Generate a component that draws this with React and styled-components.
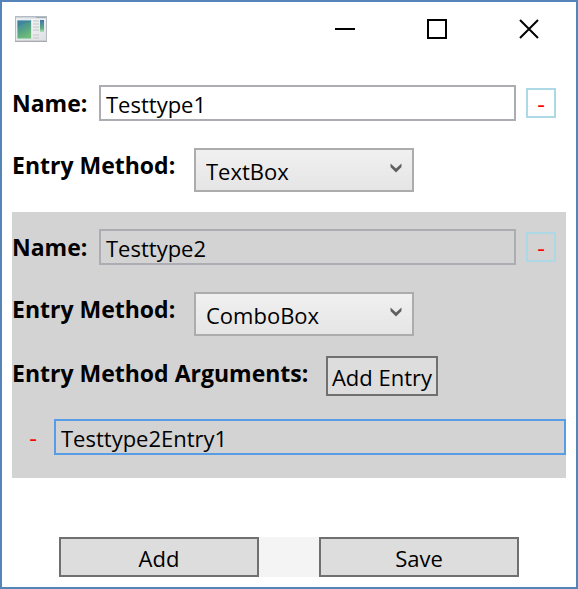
import React, { useState } from "react";
import styled, { createGlobalStyle } from "styled-components";

const GlobalStyle = createGlobalStyle`
  *, *::before, *::after { box-sizing: border-box; }
  body { margin: 0; background: #fff; }
  body, button, input, select {
    font-family: "Open Sans", "Noto Sans", sans-serif;
    font-size: 22px;
    line-height: 32px;
    color: #000;
  }
`;

const Window = styled.main`
  display: flex;
  flex-direction: column;
  min-height: 100vh;
  padding: 0 10px 10px;
  border: 2px solid #5585b8;
  background: #fff;
`;

const TitleBar = styled.header`
  display: flex;
  align-items: center;
  justify-content: space-between;
  height: 54px;
  margin-right: -10px;
  padding: 0 1px 0 3px;
`;

const WindowControls = styled.div`
  display: flex;
`;

const ControlButton = styled.button`
  display: grid;
  place-items: center;
  width: 92px;
  height: 54px;
  padding: 0;
  border: 0;
  background: none;
`;

const TypeList = styled.div`
  display: flex;
  flex-direction: column;
  margin-top: 12px;
`;

const TypeItem = styled.section`
  display: flex;
  flex-direction: column;
  gap: 20px;
  padding: 10px 0 20px;
  background: ${(p) => (p.$selected ? "#d3d3d3" : "transparent")};
`;

const Row = styled.div`
  display: flex;
  align-items: ${(p) => (p.$align ? p.$align : "flex-start")};
  min-height: ${(p) => p.$height}px;
`;

const Label = styled.label`
  flex: 0 0 ${(p) => p.$width}px;
  font-size: 23px;
  line-height: 34px;
  font-weight: 700;
  white-space: nowrap;
`;

const TextInput = styled.input`
  flex: 1;
  min-width: 0;
  height: 36px;
  padding: 2px 5px 0;
  border: 2px solid ${(p) => (p.$active ? "#569de5" : "#abadb3")};
  border-radius: 0;
  outline: 0;
  background: transparent;
`;

const RemoveButton = styled.button`
  flex: none;
  width: 30px;
  height: 30px;
  margin: 0 ${(p) => (p.$plain ? "6px" : "10px")};
  padding: 2px 0 0;
  border: 2px solid ${(p) => (p.$plain ? "transparent" : "#add8e6")};
  background: none;
  color: #f00;
  font-size: 24px;
  line-height: 24px;
`;

const SelectBox = styled.div`
  display: grid;
  width: 220px;
  height: 44px;
  border: 2px solid #acacac;
  background: linear-gradient(#f0f0f0, #e5e5e5);

  > * { grid-area: 1 / 1; }
  > svg { place-self: center end; margin: 0 10px 4px 0; pointer-events: none; }
`;

const Select = styled.select`
  width: 100%;
  height: 100%;
  padding: 2px 30px 0 10px;
  border: 0;
  border-radius: 0;
  outline: 0;
  appearance: none;
  background: transparent;
`;

const PushButton = styled.button`
  width: ${(p) => p.$width}px;
  height: 40px;
  padding: 2px 0 0;
  border: 2px solid #707070;
  background: #ddd;
  white-space: nowrap;
`;

const Footer = styled.footer`
  display: flex;
  justify-content: space-between;
  width: 460px;
  max-width: 100%;
  margin: auto auto 0;
  background: #f4f4f4;
`;

function AppIcon() {
  return (
    <svg width="32" height="26" viewBox="0 0 32 26" aria-hidden="true">
      <defs>
        <linearGradient id="pane" x1="0" y1="0" x2="0.4" y2="1">
          <stop offset="0" stopColor="#4682a8" />
          <stop offset="0.5" stopColor="#4f9c8a" />
          <stop offset="1" stopColor="#6fbd78" />
        </linearGradient>
        <linearGradient id="strip" x1="0" y1="0" x2="0" y2="1">
          <stop offset="0" stopColor="#3f75a8" />
          <stop offset="0.7" stopColor="#5fae80" />
          <stop offset="1" stopColor="#b9dfbd" />
        </linearGradient>
        <linearGradient id="frame" x1="0" y1="0" x2="1" y2="1">
          <stop offset="0" stopColor="#fff" />
          <stop offset="1" stopColor="#dcdfe2" />
        </linearGradient>
      </defs>
      <rect x="0.5" y="0.5" width="31" height="24.5" fill="url(#frame)" stroke="#b4bac0" />
      <path d="M1 1h30v1.5H1z" fill="#ccd6df" />
      <path d="M21 1h10v1H21z" fill="#9eabb8" />
      <rect x="2" y="4" width="14.5" height="19" fill="url(#pane)" stroke="#d9e6e6" />
      <path d="M2.500 12c4-4 9-6 13.500-6v-1.500H2.500z" fill="#3577a5" opacity="0.4" />
      <path d="M18 5h6M18 8h6M18 11h6M18 14h6M18 19h6M18 22h6" stroke="#cfd1d3" strokeWidth="1.500" />
      <rect x="25" y="4" width="4" height="12" fill="url(#strip)" />
      <path d="M0 25.500h32" stroke="#aaa" />
    </svg>
  );
}

function Chevron() {
  return (
    <svg width="12" height="10" viewBox="0 0 12 10" aria-hidden="true">
      <path d="M0.500 0.500L6 5.500l5.500-5v3.500L6 9.500 0.500 4z" fill="#606060" />
    </svg>
  );
}

function ControlIcon({ d }) {
  return (
    <svg width="22" height="22" viewBox="0 0 22 22" fill="none" stroke="#000" strokeWidth="2" aria-hidden="true">
      <path d={d} />
    </svg>
  );
}

const controls = [
  { name: "Minimize", d: "M1 11h20" },
  { name: "Maximize", d: "M2 2h18v18H2z" },
  { name: "Close", d: "M2 2l18 18M20 2L2 20" },
];

function EntryType({ id, initialName, initialMethod, initialEntries = [], selected }) {
  const [name, setName] = useState(initialName);
  const [method, setMethod] = useState(initialMethod);
  const [entries, setEntries] = useState(initialEntries);

  return (
    <TypeItem $selected={selected}>
      <Row $height={50} $align="center">
        <Label $width={87} htmlFor={`${id}-name`}>Name:</Label>
        <TextInput id={`${id}-name`} value={name} onChange={(e) => setName(e.target.value)} />
        <RemoveButton type="button" aria-label={`Remove ${name}`}>-</RemoveButton>
      </Row>
      <Row $height={44}>
        <Label $width={182} htmlFor={`${id}-method`}>Entry Method:</Label>
        <SelectBox>
          <Select id={`${id}-method`} value={method} onChange={(e) => setMethod(e.target.value)}>
            <option>TextBox</option>
            <option>ComboBox</option>
          </Select>
          <Chevron />
        </SelectBox>
      </Row>
      {method === "ComboBox" && (
        <>
          <Row $height={40}>
            <Label as="span" $width={314}>Entry Method Arguments:</Label>
            <PushButton $width={112} type="button" onClick={() => setEntries([...entries, ""])}>
              Add Entry
            </PushButton>
          </Row>
          {entries.map((entry, i) => (
            <Row key={i} $height={42} $align="center">
              <RemoveButton
                $plain
                type="button"
                aria-label="Remove entry"
                onClick={() => setEntries(entries.filter((_, n) => n !== i))}
              >
                -
              </RemoveButton>
              <TextInput
                $active
                aria-label={`Entry ${i + 1}`}
                value={entry}
                onChange={(e) => setEntries(entries.map((v, n) => (n === i ? e.target.value : v)))}
              />
            </Row>
          ))}
        </>
      )}
    </TypeItem>
  );
}

export default function App() {
  return (
    <>
      <GlobalStyle />
      <Window>
        <TitleBar>
          <AppIcon />
          <WindowControls>
            {controls.map((c) => (
              <ControlButton key={c.name} type="button" aria-label={c.name}>
                <ControlIcon d={c.d} />
              </ControlButton>
            ))}
          </WindowControls>
        </TitleBar>
        <TypeList>
          <EntryType id="type1" initialName="Testtype1" initialMethod="TextBox" />
          <EntryType
            id="type2"
            initialName="Testtype2"
            initialMethod="ComboBox"
            initialEntries={["Testtype2Entry1"]}
            selected
          />
        </TypeList>
        <Footer>
          <PushButton $width={200} type="button">Add</PushButton>
          <PushButton $width={200} type="button">Save</PushButton>
        </Footer>
      </Window>
    </>
  );
}
